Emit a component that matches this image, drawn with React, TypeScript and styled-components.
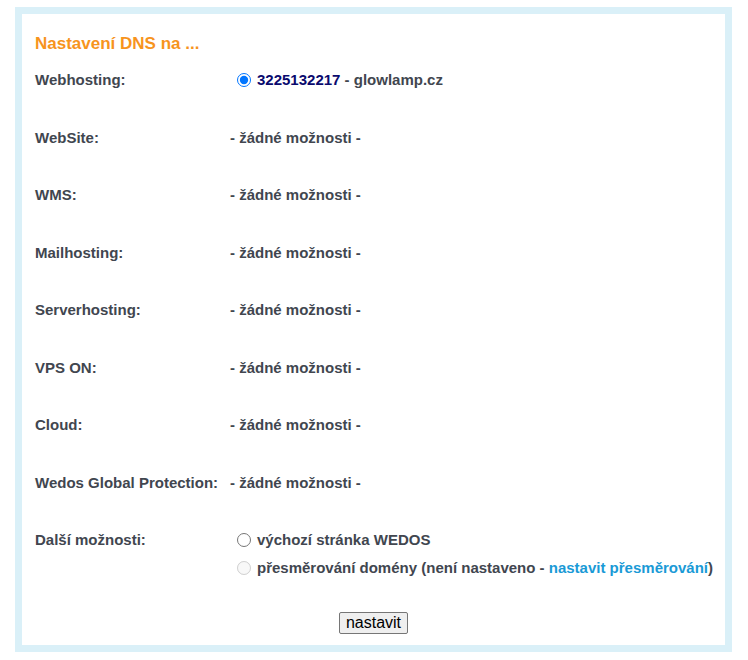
import styled, { createGlobalStyle } from "styled-components";

const GlobalStyle = createGlobalStyle`
  html, body {
    margin: 0;
    padding: 0;
    background: #ffffff;
  }
  body {
    font-family: "Liberation Sans", Arial, sans-serif;
  }
`;

const Frame = styled.div`
  box-sizing: border-box;
  width: 717px;
  height: 645px;
  margin: 7px 0 0 15px;
  border: 7px solid #daf0f8;
  background: #ffffff;
  padding: 21px 13px 11px 13px;
  display: flex;
  flex-direction: column;
`;

const Title = styled.h2`
  margin: 0 0 17px 0;
  font-size: 17px;
  line-height: 18px;
  font-weight: bold;
  color: #f7941d;
`;

const Grid = styled.div`
  display: grid;
  grid-template-columns: 195px 1fr;
  grid-auto-rows: 57.5px;
`;

const Label = styled.div`
  font-size: 15px;
  line-height: 20px;
  font-weight: bold;
  color: #41464f;
`;

const Value = styled.div`
  font-size: 15px;
  line-height: 20px;
  font-weight: bold;
  color: #41464f;
  display: flex;
  flex-direction: column;
  gap: 8px;
`;

const Option = styled.label<{ disabled?: boolean }>`
  display: flex;
  align-items: center;
  white-space: nowrap;
  cursor: ${(p) => (p.disabled ? "default" : "pointer")};
`;

const Radio = styled.input.attrs({ type: "radio" })`
  width: 14px;
  height: 14px;
  margin: 0 6px 0 7px;
  accent-color: #0075ff;
`;

const Number = styled.span`
  color: #0a0a6e;
`;

const Link = styled.a`
  color: #1a9ad6;
  text-decoration: none;
`;

const Footer = styled.div`
  margin-top: auto;
  display: flex;
  justify-content: center;
`;

const Button = styled.button`
  font-family: "Liberation Sans", Arial, sans-serif;
  font-size: 16px;
  line-height: 18px;
  height: 22px;
  padding: 1px 6px;
  color: #000000;
  background: #efefef;
  border: 1px solid #767676;
  border-radius: 2px;
  cursor: pointer;
`;

const services = [
  "WebSite:",
  "WMS:",
  "Mailhosting:",
  "Serverhosting:",
  "VPS ON:",
  "Cloud:",
  "Wedos Global Protection:",
];

export default function App() {
  return (
    <>
      <GlobalStyle />
      <Frame>
        <Title>Nastavení DNS na ...</Title>
        <Grid>
          <Label>Webhosting:</Label>
          <Value>
            <Option>
              <Radio name="dns" defaultChecked />
              <span>
                <Number>3225132217</Number> - glowlamp.cz
              </span>
            </Option>
          </Value>
          {services.map((s) => (
            <>
              <Label key={s}>{s}</Label>
              <Value key={s + "-v"}>- žádné možnosti -</Value>
            </>
          ))}
          <Label>Další možnosti:</Label>
          <Value>
            <Option>
              <Radio name="dns" />
              výchozí stránka WEDOS
            </Option>
            <Option disabled>
              <Radio name="dns" disabled />
              <span>
                přesměrování domény (není nastaveno -{" "}
                <Link href="#">nastavit přesměrování</Link>)
              </span>
            </Option>
          </Value>
        </Grid>
        <Footer>
          <Button>nastavit</Button>
        </Footer>
      </Frame>
    </>
  );
}
